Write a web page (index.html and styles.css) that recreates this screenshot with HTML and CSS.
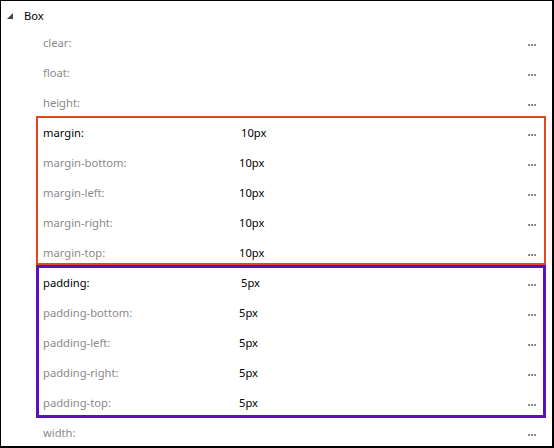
FILE: index.html
```html
<!DOCTYPE html>
<html>
<head>
<meta charset="utf-8">
<link rel="stylesheet" href="styles.css">
</head>
<body>
<div class="panel">
  <div class="header">
    <svg class="twisty" width="6" height="6" viewBox="0 0 6 6"><polygon points="6,0 6,6 0,6" fill="#444"/></svg>
    <span class="group">Box</span>
  </div>
  <div class="list">
    <div class="row"><span class="name">clear:</span><span class="val"></span><span class="more"><i></i><i></i><i></i></span></div>
    <div class="row"><span class="name">float:</span><span class="val"></span><span class="more"><i></i><i></i><i></i></span></div>
    <div class="row"><span class="name">height:</span><span class="val"></span><span class="more"><i></i><i></i><i></i></span></div>
    <div class="row"><span class="name main">margin:</span><span class="val main">10px</span><span class="more"><i></i><i></i><i></i></span></div>
    <div class="row"><span class="name">margin-bottom:</span><span class="val">10px</span><span class="more"><i></i><i></i><i></i></span></div>
    <div class="row"><span class="name">margin-left:</span><span class="val">10px</span><span class="more"><i></i><i></i><i></i></span></div>
    <div class="row"><span class="name">margin-right:</span><span class="val">10px</span><span class="more"><i></i><i></i><i></i></span></div>
    <div class="row"><span class="name">margin-top:</span><span class="val">10px</span><span class="more"><i></i><i></i><i></i></span></div>
    <div class="row"><span class="name main">padding:</span><span class="val main">5px</span><span class="more"><i></i><i></i><i></i></span></div>
    <div class="row"><span class="name">padding-bottom:</span><span class="val">5px</span><span class="more"><i></i><i></i><i></i></span></div>
    <div class="row"><span class="name">padding-left:</span><span class="val">5px</span><span class="more"><i></i><i></i><i></i></span></div>
    <div class="row"><span class="name">padding-right:</span><span class="val">5px</span><span class="more"><i></i><i></i><i></i></span></div>
    <div class="row"><span class="name">padding-top:</span><span class="val">5px</span><span class="more"><i></i><i></i><i></i></span></div>
    <div class="row"><span class="name">width:</span><span class="val"></span><span class="more"><i></i><i></i><i></i></span></div>
    <div class="hl hl-margin"></div>
    <div class="hl hl-padding"></div>
  </div>
</div>
</body>
</html>
```
FILE: styles.css
```css
html, body {
  margin: 0;
  padding: 0;
  background: #fff;
}
.panel {
  width: 554px;
  height: 448px;
  box-sizing: border-box;
  border-top: 1px solid #000;
  border-left: 1px solid #000;
  border-right: 2px solid #000;
  border-bottom: 2px solid #000;
  font-family: "Noto Sans", "Segoe UI", sans-serif;
  font-size: 11.2px;
  color: #000;
  overflow: hidden;
}
.header {
  height: 26px;
  box-sizing: border-box;
  padding-top: 2px;
  display: flex;
  align-items: center;
}
.twisty {
  margin-left: 6px;
  margin-top: 1px;
  display: block;
}
.group {
  margin-left: 11px;
}
.list {
  position: relative;
}
.row {
  height: 30px;
  display: flex;
  align-items: center;
}
.name {
  width: 195px;
  padding-left: 42px;
  color: #8a8a8a;
}
.name.main {
  color: #000;
}
.val {
  flex: 1;
  padding-left: 1px;
}
.val.main {
  padding-left: 3px;
}
.more {
  display: flex;
  gap: 1px;
  margin-right: 16px;
  margin-top: 5px;
}
.more i {
  display: block;
  width: 2px;
  height: 2px;
  background: linear-gradient(90deg, #c98b4e 50%, #3f8fd2 50%);
}
.hl {
  position: absolute;
  left: 35px;
  width: 510px;
  box-sizing: border-box;
  pointer-events: none;
}
.hl-margin {
  top: 89px;
  height: 149px;
  border: 2px solid #e4461d;
}
.hl-padding {
  top: 238px;
  height: 153px;
  border: 3px solid #5a10c2;
}
```
